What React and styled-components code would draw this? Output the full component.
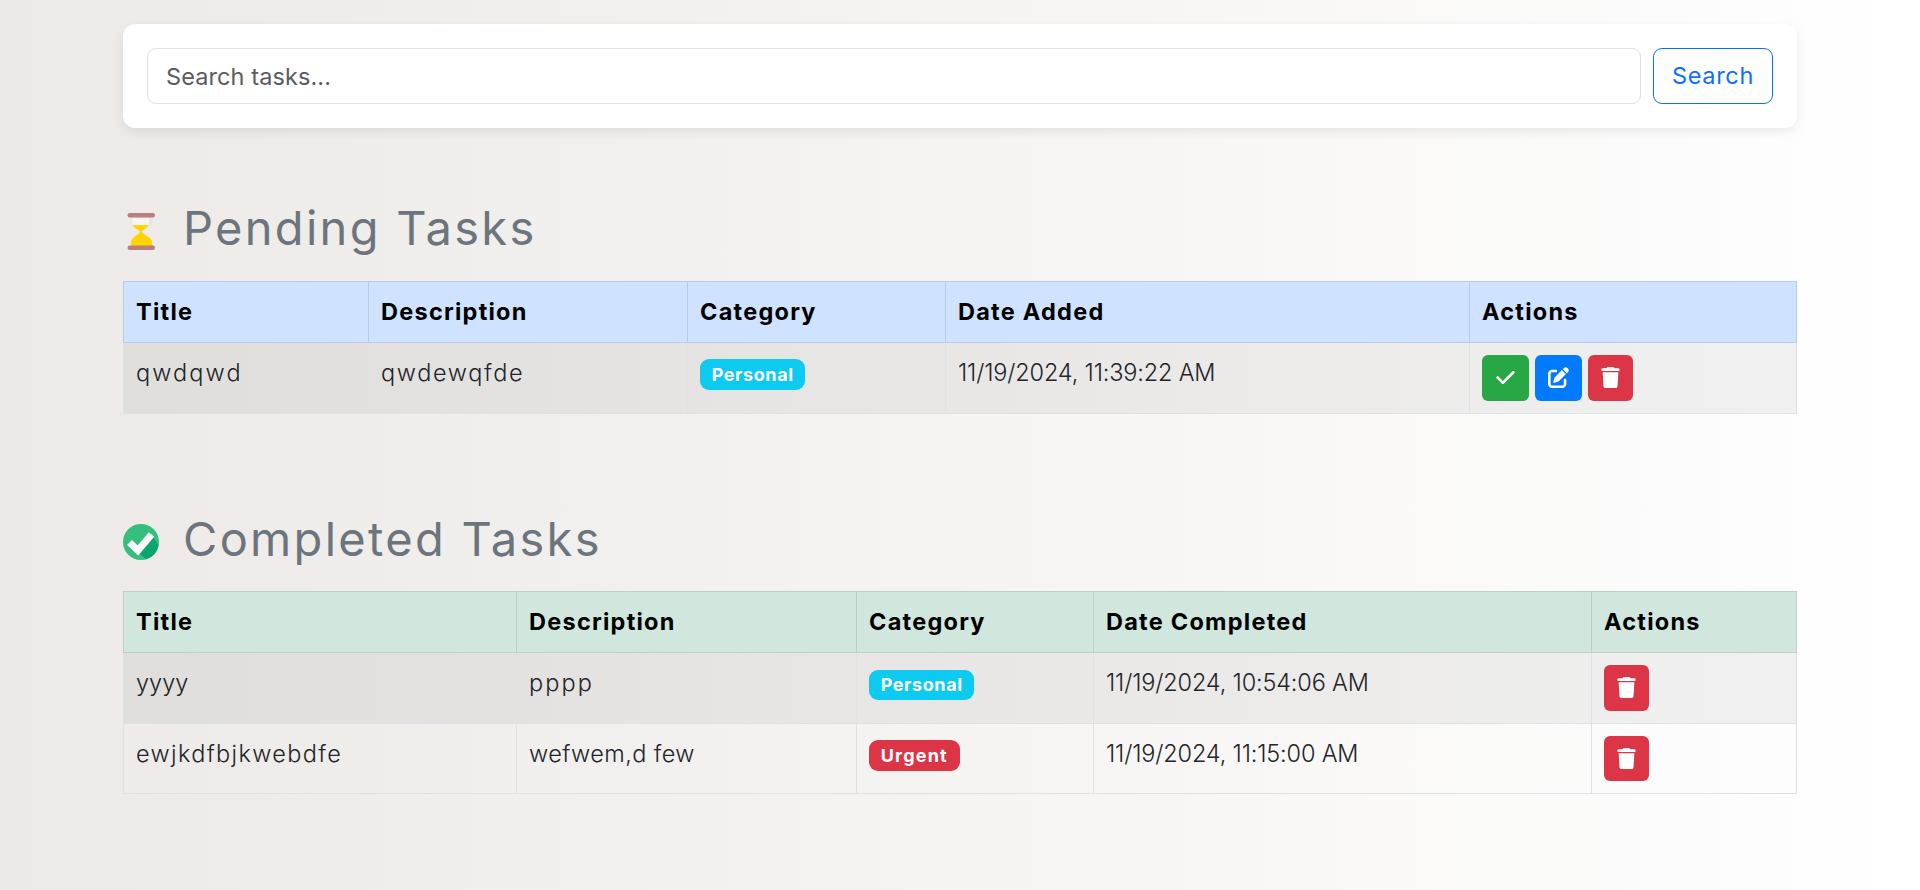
import React from 'react';
import styled, { createGlobalStyle } from 'styled-components';
import { FaCheck, FaPenToSquare, FaTrash } from 'react-icons/fa6';

const Global = createGlobalStyle`
  html, body { margin: 0; padding: 0; }
  body {
    font-family: Inter, "Liberation Sans", sans-serif;
    font-size: 23.5px;
    line-height: 1.5;
    color: #212529;
  }
`;
const Page = styled.div`
  min-height: 100vh;
  box-sizing: border-box;
  padding: 24px 123px;
  background: linear-gradient(to right, #ece9e6, #ffffff);
`;
const SearchCard = styled.form`
  display: flex;
  gap: 12px;
  padding: 24px;
  background: #fff;
  border-radius: 12px;
  box-shadow: 0 4px 12px rgba(0,0,0,.08);
  margin-bottom: 71px;
`;
const SearchInput = styled.input`
  flex: 1;
  min-width: 0;
  height: 56px;
  box-sizing: border-box;
  padding: 9px 18px;
  border: 1px solid #dee2e6;
  border-radius: 9px;
  font: 400 23.5px/1.5 Inter, sans-serif;
  letter-spacing: 0.1px;
  color: #212529;
  &::placeholder { color: #595c5f; opacity: 1; }
`;
const SearchButton = styled.button`
  width: 120px;
  height: 56px;
  padding: 0;
  background: transparent;
  border: 1px solid #0d6efd;
  border-radius: 9px;
  color: #0d6efd;
  font: 400 23.5px/1.5 Inter, sans-serif;
  letter-spacing: 0.7px;
`;
const Section = styled.section`
  margin-bottom: 96px;
`;
const Heading = styled.h2`
  display: flex;
  align-items: center;
  gap: 24px;
  margin: 0 0 24px;
  font-size: 47px;
  line-height: 57.6px;
  font-weight: 400;
  color: #6c757d;
  letter-spacing: 2.3px;
  svg { flex: none; margin-top: 8px; }
`;
const Table = styled.table`
  width: calc(100% - 1px);
  table-layout: fixed;
  border-collapse: collapse;
  border: 1px solid #dee2e6;
`;
const Th = styled.th`
  padding: 12px;
  text-align: left;
  font-size: 23.5px;
  line-height: 36px;
  font-weight: 700;
  color: #000;
  letter-spacing: 1.25px;
  background: ${p => p.$tone === 'success' ? '#d1e7dd' : '#cfe2ff'};
  border: 1px solid ${p => p.$tone === 'success' ? '#bcd0c7' : '#bacbe6'};
`;
const Row = styled.tr`
  background: ${p => p.$striped ? 'rgba(0,0,0,.05)' : 'transparent'};
`;
const Td = styled.td`
  padding: 12px;
  vertical-align: top;
  font-size: 23.5px;
  line-height: 36px;
  font-weight: 300;
  color: #212529;
  border: 1px solid #dee2e6;
  white-space: nowrap;
  letter-spacing: ${p => p.$track ?? 0}px;
`;
const Badge = styled.span`
  display: inline-block;
  padding: 6.3px 11.7px;
  border-radius: 9px;
  font-size: 18px;
  line-height: 18px;
  font-weight: 700;
  color: #fff;
  vertical-align: baseline;
  letter-spacing: ${p => p.$kind === 'Urgent' ? 1.2 : 0.6}px;
  background: ${p => p.$kind === 'Urgent' ? '#dc3545' : '#0dcaf0'};
`;
const kinds = {
  done: { bg: '#28a745', w: 47 },
  edit: { bg: '#007bff', w: 47 },
  remove: { bg: '#dc3545', w: 45 },
};
const ActionButton = styled.button`
  display: inline-flex;
  align-items: center;
  justify-content: center;
  width: ${p => kinds[p.$kind].w}px;
  height: ${p => p.$complete ? 45.5 : 46}px;
  padding: 0;
  margin-right: 6px;
  border: 1px solid transparent;
  border-radius: 6px;
  color: #fff;
  font-size: 21px;
  vertical-align: top;
  background: ${p => kinds[p.$kind].bg};
`;

const Hourglass = () => (
  <svg width="36" height="38" viewBox="0 0 36 38" aria-hidden="true">
    <path d="M7 4h23v4c0 5-7 7-10 10.500 3 3.500 10 6 10 11v5H7v-5c0-5 7-7.500 10-11C14 15 7 13 7 8z" fill="#e9e6e6" />
    <path d="M9 5h17v3c0 2 -.500 3-1 4H10c-.500-1-1-2-1-4z" fill="#f7f5f4" />
    <path d="M10 12H25C25 15 20 16 18.500 18.500C20 22 29 24 29 29V33H8V29C8 24 16 22 17 18.500C15 16 10 15 10 12Z" fill="#ffd400" />
    <rect x="4.500" y="0" width="27.500" height="4.500" rx="2.200" fill="#b87f7d" />
    <rect x="4.500" y="32.500" width="27.500" height="4.500" rx="2.200" fill="#b87f7d" />
  </svg>
);
const CheckCircle = () => (
  <svg width="36" height="36" viewBox="0 0 36 36" aria-hidden="true">
    <circle cx="18" cy="18" r="18" fill="#34bf7f" />
    <path d="M15 28L30 13L35.500 21A18 18 0 0 1 23 35.300Z" fill="#0aa56f" />
    <path d="M6.500 18.500L15 26.500L28.500 10.500" fill="none" stroke="#fff" strokeWidth="7" strokeLinejoin="miter" />
  </svg>
);

const Actions = ({ complete }) => (
  <>
    {complete || <ActionButton type="button" $kind="done"><FaCheck /></ActionButton>}
    {complete || <ActionButton type="button" $kind="edit"><FaPenToSquare /></ActionButton>}
    <ActionButton type="button" $kind="remove" $complete={complete}><FaTrash /></ActionButton>
  </>
);

const TaskTable = ({ tone, widths, dateLabel, rows, complete }) => (
  <Table>
    <colgroup>{widths.map((w, i) => <col key={i} style={{ width: w }} />)}</colgroup>
    <thead>
      <tr>
        {['Title', 'Description', 'Category', dateLabel, 'Actions'].map(h => <Th key={h} $tone={tone}>{h}</Th>)}
      </tr>
    </thead>
    <tbody>
      {rows.map((r, i) => (
        <Row key={r.title} $striped={i % 2 === 0}>
          <Td $track={r.t1}>{r.title}</Td>
          <Td $track={r.t2}>{r.desc}</Td>
          <Td><Badge $kind={r.cat}>{r.cat}</Badge></Td>
          <Td $track={-0.16}>{r.date}</Td>
          <Td><Actions complete={complete} /></Td>
        </Row>
      ))}
    </tbody>
  </Table>
);

export default function App() {
  return (
    <Page>
      <Global />
      <SearchCard onSubmit={e => e.preventDefault()}>
        <SearchInput placeholder="Search tasks..." />
        <SearchButton>Search</SearchButton>
      </SearchCard>
      <Section>
        <Heading><Hourglass />Pending Tasks</Heading>
        <TaskTable tone="primary" widths={[245, 319, 258, 524, 327]} dateLabel="Date Added"
          rows={[{ title: 'qwdqwd', t1: 2.1, desc: 'qwdewqfde', t2: 1.65, cat: 'Personal', date: '11/19/2024, 11:39:22 AM' }]} />
      </Section>
      <Section>
        <Heading><CheckCircle />Completed Tasks</Heading>
        <TaskTable complete tone="success" widths={[393, 340, 237, 498, 205]} dateLabel="Date Completed"
          rows={[
            { title: 'yyyy', t1: 0, desc: 'pppp', t2: 2.1, cat: 'Personal', date: '11/19/2024, 10:54:06 AM' },
            { title: 'ewjkdfbjkwebdfe', t1: 1.35, desc: 'wefwem,d few', t2: 0.4, cat: 'Urgent', date: '11/19/2024, 11:15:00 AM' },
          ]} />
      </Section>
    </Page>
  );
}
